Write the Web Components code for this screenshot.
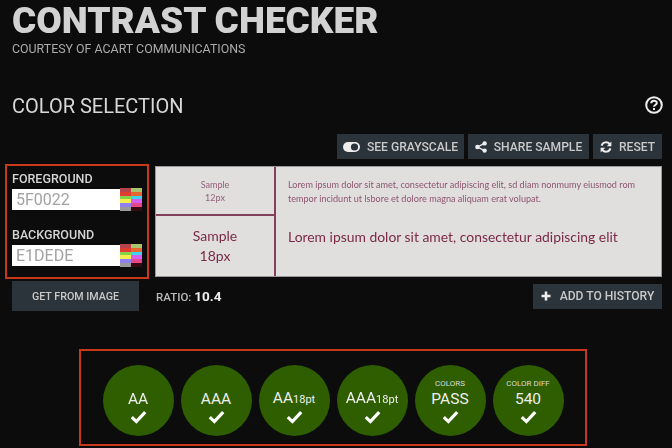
<!DOCTYPE html>
<html lang="en">
<head>
<meta charset="utf-8">
<title>Contrast Checker</title>
<style>
html,body{margin:0;height:448px;overflow:hidden;background:#0c0c0c;}
body{font-family:Roboto,"Liberation Sans",Arial,sans-serif;color:#ccc;}
</style>
</head>
<body>
<contrast-app></contrast-app>
<script>
const icons = {
    toggle: `<svg width="17" height="10" viewBox="0 0 17 10"><rect x="0" y="0" width="17" height="10" rx="5" fill="#eee"/><circle cx="11.5" cy="5" r="3.6" fill="#2b333b"/></svg>`,
    share: `<svg width="12" height="12" viewBox="0 0 12 12"><path d="M9.5 2.3 2.5 6l7 3.7" fill="none" stroke="#eee" stroke-width="1.4"/><circle cx="9.6" cy="2.4" r="2.2" fill="#eee"/><circle cx="2.4" cy="6" r="2.2" fill="#eee"/><circle cx="9.6" cy="9.6" r="2.2" fill="#eee"/></svg>`,
    refresh: `<svg width="12" height="12" viewBox="0 0 12 12"><path d="M1.6 4.6A4.6 4.6 0 0 1 9.6 3" fill="none" stroke="#eee" stroke-width="2"/><path d="M11.4 .6v4.6H6.8z" fill="#eee"/><path d="M10.4 7.4A4.6 4.6 0 0 1 2.4 9" fill="none" stroke="#eee" stroke-width="2"/><path d="M.6 11.4V6.8h4.6z" fill="#eee"/></svg>`,
    plus: `<svg width="10" height="10" viewBox="0 0 10 10"><path d="M5 .5v9M.5 5h9" stroke="#eee" stroke-width="2.6"/></svg>`
};

const buttonTemplate = document.createElement("template");
buttonTemplate.innerHTML = `
<style>
:host{display:inline-flex;}
button{
    display:flex;
    align-items:center;
    justify-content:center;
    gap:var(--btn-gap,7px);
    width:100%;
    height:var(--btn-height,25px);
    padding:0;
    border:0;
    background:#2b333b;
    color:#c9c9c9;
    font:500 var(--btn-size,12.1px) Roboto,"Liberation Sans",Arial,sans-serif;
    white-space:nowrap;
}
span{display:flex;}
</style>
<button><span id="icon"></span><slot></slot></button>
`;
class CcButton extends HTMLElement{
    constructor(){
        super();
        this.attachShadow({mode:"open"});
        this.shadowRoot.appendChild(buttonTemplate.content.cloneNode(true));
    }
    connectedCallback(){
        const icon = this.shadowRoot.querySelector("#icon");
        const name = this.getAttribute("icon");
        if(name){
            icon.innerHTML = icons[name];
        }else{
            icon.remove();
        }
    }
}
customElements.define("cc-button",CcButton);

const swatchRows = [
    ["#b8434b","#a9c56c"],
    ["#e23d33","#e8672e"],
    ["#86d24a","#3fd3ee"],
    ["#f5ee4c","#d65bf0"],
    ["#8f82f0","#e3498a"],
    ["#9a9a9a","#3a0a12"]
];
class CcSwatches extends HTMLElement{
    constructor(){
        super();
        this.attachShadow({mode:"open"});
        const cells = swatchRows.map(r => r.map(c => `<i style="background:${c}"></i>`).join("")).join("");
        this.shadowRoot.innerHTML = `
<style>
:host{display:grid;grid-template-columns:11px 11px;grid-auto-rows:1fr;width:22px;height:23px;}
</style>${cells}`;
    }
}
customElements.define("cc-swatches",CcSwatches);

const fieldTemplate = document.createElement("template");
fieldTemplate.innerHTML = `
<style>
:host{display:block;}
label{display:block;font-size:12.5px;font-weight:500;line-height:14px;color:#d4d4d4;margin-bottom:2px;}
div{display:flex;align-items:center;}
input{
    box-sizing:border-box;
    width:108px;
    height:21px;
    border:0;
    padding:0 4px;
    background:#fff;
    color:#a2a2a2;
    font:16px Roboto,"Liberation Sans",Arial,sans-serif;
}
</style>
<label><slot></slot></label>
<div><input><cc-swatches></cc-swatches></div>
`;
class CcColorField extends HTMLElement{
    constructor(){
        super();
        this.attachShadow({mode:"open"});
        this.shadowRoot.appendChild(fieldTemplate.content.cloneNode(true));
    }
    connectedCallback(){
        this.shadowRoot.querySelector("input").setAttribute("value",this.getAttribute("value"));
    }
}
customElements.define("cc-color-field",CcColorField);

const sampleTemplate = document.createElement("template");
sampleTemplate.innerHTML = `
<style>
:host{
    display:grid;
    grid-template-columns:120px 1fr;
    grid-template-rows:49px 1fr;
    box-sizing:border-box;
    height:111px;
    background:#e1dede;
    color:#7a2a48;
    border:1px solid #9a9898;
    font-family:Lato,"Liberation Sans",sans-serif;
}
.small,.large{display:flex;align-items:center;justify-content:center;text-align:center;border-right:2px solid #84405a;}
.small{font-size:9px;line-height:13px;color:#92607a;border-bottom:2px solid #84405a;}
.large{font-size:14px;line-height:20px;}
.para{padding:11px 12px 0;color:#8c5570;font-size:9.1px;line-height:13.5px;}
.line{padding:11px 12px 0;font-size:13.9px;line-height:20px;}
</style>
<div class="small">Sample<br>12px</div>
<div class="para">Lorem ipsum dolor sit amet, consectetur adipiscing elit, sd diam nonmumy eiusmod rom tempor incidunt ut lsbore et dolore magna aliquam erat volupat.</div>
<div class="large">Sample<br>18px</div>
<div class="line">Lorem ipsum dolor sit amet, consectetur adipiscing elit</div>
`;
class CcSample extends HTMLElement{
    constructor(){
        super();
        this.attachShadow({mode:"open"});
        this.shadowRoot.appendChild(sampleTemplate.content.cloneNode(true));
    }
}
customElements.define("cc-sample",CcSample);

class CcBadge extends HTMLElement{
    constructor(){
        super();
        this.attachShadow({mode:"open"});
        this.shadowRoot.innerHTML = `
<style>
:host{
    display:flex;
    flex-direction:column;
    align-items:center;
    justify-content:flex-end;
    box-sizing:border-box;
    width:71px;
    height:71px;
    padding-bottom:12px;
    border-radius:50%;
    background:#2e5e00;
    color:#eee;
}
small{font-size:8px;line-height:9px;color:#d8d8d8;margin-bottom:2px;}
b{font-weight:400;font-size:15.5px;line-height:19px;white-space:nowrap;}
sub{font-size:11px;vertical-align:baseline;}
svg{display:block;margin-top:1px;}
</style>
${this.getAttribute("top") ? `<small>${this.getAttribute("top")}</small>` : ""}
<b>${this.getAttribute("label")}${this.getAttribute("sub") ? `<sub>${this.getAttribute("sub")}</sub>` : ""}</b>
<svg width="17" height="14" viewBox="0 0 17 14"><path d="M1.8 7.2 6.4 11.6 15.2 2.2" fill="none" stroke="#fff" stroke-width="3.2"/></svg>`;
    }
}
customElements.define("cc-badge",CcBadge);

const appTemplate = document.createElement("template");
appTemplate.innerHTML = `
<style>
:host{display:block;padding:0 10px 0 12px;filter:blur(.3px);}
h1{margin:0;font-size:37px;line-height:42px;font-weight:900;color:#d2d2d2;white-space:nowrap;}
.sub{margin-top:0;font-size:12.4px;line-height:14px;color:#aaa;}
.head{display:flex;align-items:flex-start;justify-content:space-between;margin-top:38px;}
h2{margin:0;font-size:20px;line-height:24px;font-weight:400;color:#d8d8d8;}
.head svg{margin-top:2px;margin-right:-1px;}
.tools{display:flex;justify-content:flex-end;gap:4px;margin-top:16px;}
.main{display:flex;margin:5px 0 0 -7px;align-items:center;}
.picker{
    box-sizing:border-box;
    width:144px;
    height:115px;
    margin-right:6px;
    padding:6px 5px 0;
    border:2px solid #c8391c;
    display:flex;
    flex-direction:column;
    gap:17px;
}
cc-sample{flex:1;}
.row{display:flex;align-items:center;margin-top:2px;}
.ratio{margin-left:17px;font-size:11.5px;font-weight:500;color:#bbb;}
.ratio b{font-size:13.5px;color:#eee;}
.row .add{margin-left:auto;}
.results{
    display:flex;
    gap:7px;
    justify-content:center;
    box-sizing:border-box;
    width:508px;
    height:97px;
    margin:38px 0 0 67px;
    padding-top:14px;
    border:2px solid #c8391c;
}
</style>
<h1>CONTRAST CHECKER</h1>
<div class="sub">COURTESY OF ACART COMMUNICATIONS</div>
<div class="head">
    <h2>COLOR SELECTION</h2>
    <svg width="18" height="18" viewBox="0 0 18 18"><circle cx="9" cy="9" r="7.8" fill="none" stroke="#eee" stroke-width="2"/><path d="M6.2 7.2C6.2 3.8 11.8 3.9 11.8 7c0 2-2.8 2-2.8 3.8" fill="none" stroke="#eee" stroke-width="2"/><rect x="8" y="12" width="2" height="2" fill="#eee"/></svg>
</div>
<div class="tools">
    <cc-button icon="toggle" style="width:127px">SEE GRAYSCALE</cc-button>
    <cc-button icon="share" style="width:121px">SHARE SAMPLE</cc-button>
    <cc-button icon="refresh" style="width:69px">RESET</cc-button>
</div>
<div class="main">
    <div class="picker">
        <cc-color-field value="5F0022">FOREGROUND</cc-color-field>
        <cc-color-field value="E1DEDE">BACKGROUND</cc-color-field>
    </div>
    <cc-sample></cc-sample>
</div>
<div class="row">
    <cc-button style="width:127px;--btn-height:30px;--btn-size:10.7px">GET FROM IMAGE</cc-button>
    <div class="ratio">RATIO: <b>10.4</b></div>
    <cc-button class="add" icon="plus" style="width:129px;--btn-gap:9px">ADD TO HISTORY</cc-button>
</div>
<div class="results">
    <cc-badge label="AA"></cc-badge>
    <cc-badge label="AAA"></cc-badge>
    <cc-badge label="AA" sub="18pt"></cc-badge>
    <cc-badge label="AAA" sub="18pt"></cc-badge>
    <cc-badge top="COLORS" label="PASS"></cc-badge>
    <cc-badge top="COLOR DIFF" label="540"></cc-badge>
</div>
`;
class ContrastApp extends HTMLElement{
    constructor(){
        super();
        this.attachShadow({mode:"open"});
        this.shadowRoot.appendChild(appTemplate.content.cloneNode(true));
    }
}
customElements.define("contrast-app",ContrastApp);
</script>
</body>
</html>
